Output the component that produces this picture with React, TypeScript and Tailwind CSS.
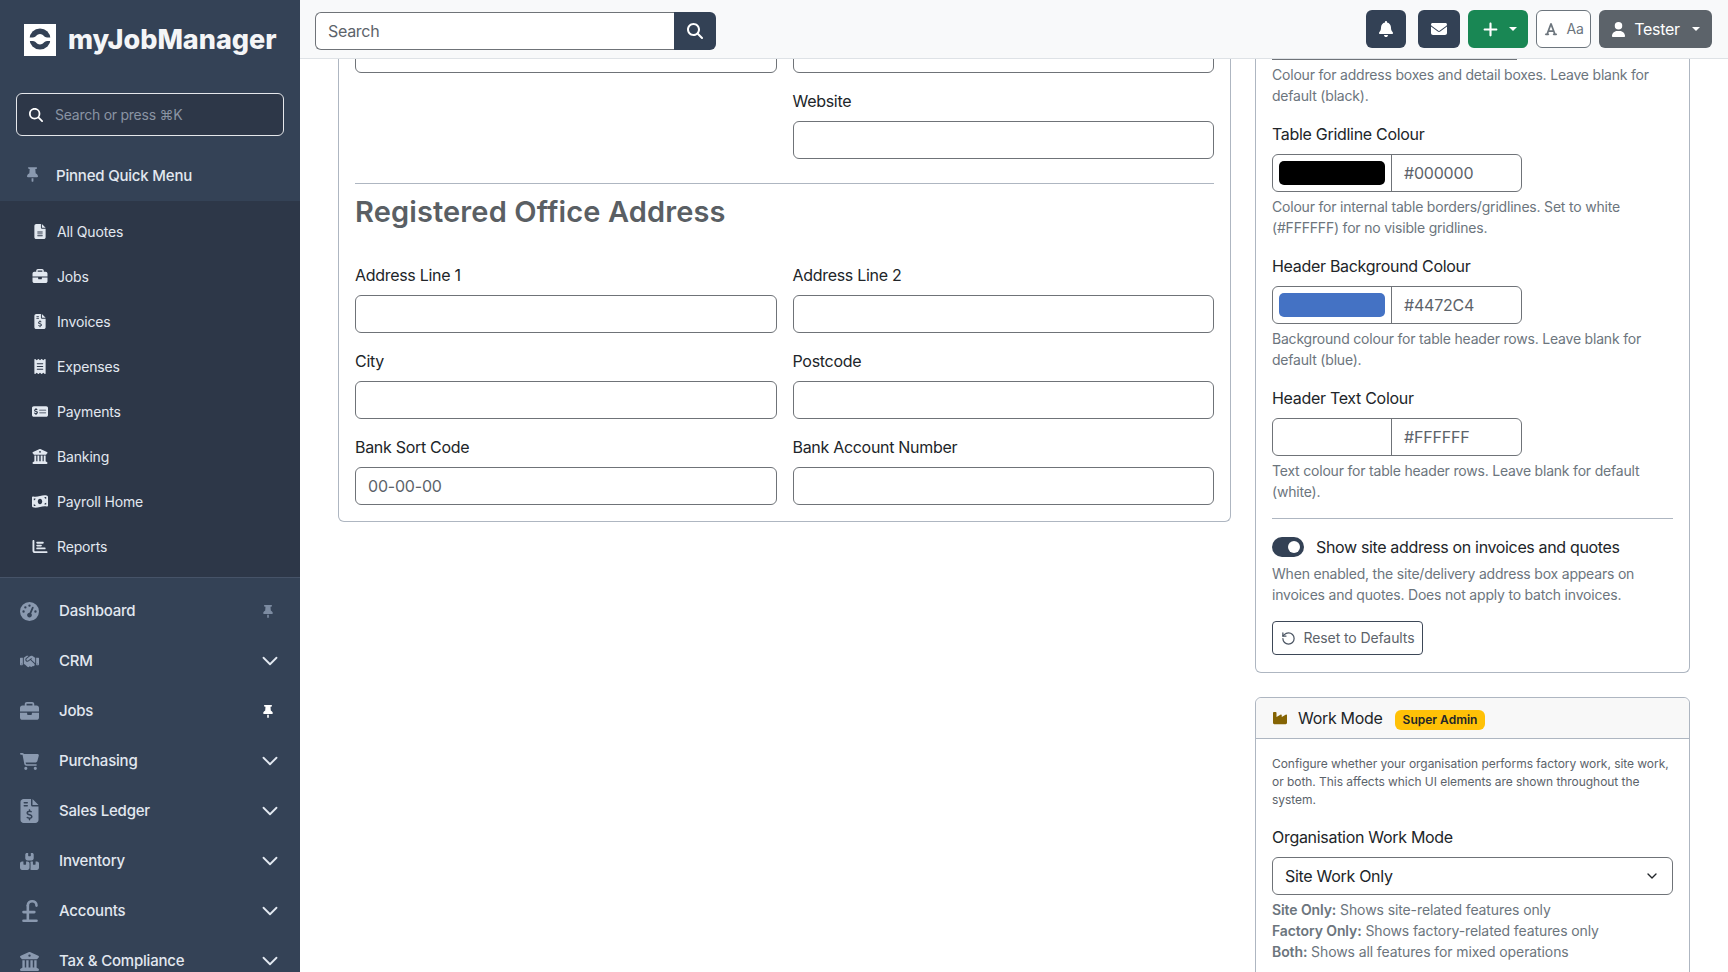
import {
  FaBell, FaEnvelope, FaPlus, FaUser, FaMagnifyingGlass, FaFont, FaIndustry, FaThumbtack,
  FaFileLines, FaBriefcase, FaFileInvoiceDollar, FaReceipt, FaMoneyCheckDollar, FaBuildingColumns,
  FaMoneyBillWave, FaChartBar, FaGaugeHigh, FaHandshake, FaCartShopping, FaBoxesStacked,
} from "react-icons/fa6"
import { ChevronDown, PoundSterling, RotateCcw } from "lucide-react"
import type { ReactNode } from "react"

const pinned = [
  { label: "All Quotes", icon: FaFileLines },
  { label: "Jobs", icon: FaBriefcase },
  { label: "Invoices", icon: FaFileInvoiceDollar },
  { label: "Expenses", icon: FaReceipt },
  { label: "Payments", icon: FaMoneyCheckDollar },
  { label: "Banking", icon: FaBuildingColumns },
  { label: "Payroll Home", icon: FaMoneyBillWave },
  { label: "Reports", icon: FaChartBar },
]

const nav = [
  { label: "CRM", icon: <FaHandshake className="h-[19px] w-[19px]" /> },
  { label: "Jobs", icon: <FaBriefcase className="h-[19px] w-[19px]" />, pin: true },
  { label: "Purchasing", icon: <FaCartShopping className="h-[19px] w-[19px]" /> },
  { label: "Sales Ledger", icon: <FaFileInvoiceDollar className="h-6 w-[19px]" /> },
  { label: "Inventory", icon: <FaBoxesStacked className="h-[19px] w-[19px]" /> },
  { label: "Accounts", icon: <PoundSterling className="-ml-[3px] h-[26px] w-[26px]" strokeWidth={2.4} /> },
  { label: "Tax & Compliance", icon: <FaBuildingColumns className="h-[19px] w-[19px]" /> },
]

function Logo() {
  return (
    <svg viewBox="0 0 32 32" className="h-8 w-8 shrink-0">
      <rect width="32" height="32" fill="#fff" />
      <circle cx="16" cy="15" r="10.500" fill="#334155" />
      <path d="M3 13.500h6c2.500 0 4-3.500 7-3.500s4.500 3.500 7 3.500h6v3.500h-6c-2.500 0-4 3.500-7 3.500s-4.500-3.500-7-3.500H3z" fill="#fff" />
    </svg>
  )
}

function Sidebar() {
  return (
    <aside className="w-[300px] shrink-0 overflow-hidden bg-[#344256]">
      <div className="flex h-[93px] items-start gap-3 pl-6 pt-6">
        <Logo />
        <span className="text-[27px] font-extrabold leading-8 text-[#f4f5f7]">myJobManager</span>
      </div>
      <div className="mx-4 flex h-[43px] items-center gap-3 rounded-md border border-[#e5e7eb] bg-[#2d3748] pl-3 text-sm tracking-[-0.25px] text-[#8a94a3]">
        <FaMagnifyingGlass className="h-[14px] w-[14px] text-white" />
        <span>Search or press ⌘K</span>
      </div>
      <div className="flex h-[65px] items-center pl-[27px] pt-[15px] text-[#e2e8f0]">
        <FaThumbtack className="-mt-[3px] h-[15px] w-[11px] text-[#8a99af]" />
        <span className="ml-[18px] text-[15px] font-medium tracking-[-0.2px]">Pinned Quick Menu</span>
      </div>
      <div className="border-b border-[#465368] bg-[#2d3748] py-2">
        {pinned.map((p) => (
          <div key={p.label} className="flex h-[45px] items-center text-[#e2e8f0]">
            <div className="w-[57px] shrink-0 pl-[32px]">
              <p.icon className="h-[15px] w-[16px]" />
            </div>
            <span className="text-sm tracking-[-0.15px]">{p.label}</span>
          </div>
        ))}
      </div>
      <div className="pt-2">
        <NavItem label="Dashboard" icon={<FaGaugeHigh className="h-[19px] w-[19px]" />} right={<FaThumbtack className="-ml-1 h-[13px] w-[10px] text-[#7c8ba1]" />} />
        {nav.map((n) => (
          <NavItem
            key={n.label}
            label={n.label}
            icon={n.icon}
            right={n.pin ? <FaThumbtack className="-ml-1 h-[13px] w-[10px] text-white" /> : <ChevronDown className="-mx-[6px] h-[26px] w-[26px] shrink-0 text-[#e2e8f0]" strokeWidth={1.7} />}
          />
        ))}
      </div>
    </aside>
  )
}

function NavItem({ label, icon, right }: { label: string; icon: ReactNode; right: ReactNode }) {
  return (
    <div className="flex h-[50px] items-center pl-5 pr-[23px]">
      <div className="w-[39px] shrink-0 text-[#8a99af]">{icon}</div>
      <span className="flex-1 text-[15px] font-medium tracking-[-0.2px] text-[#e2e8f0]">{label}</span>
      <div className="flex w-[14px] justify-center">{right}</div>
    </div>
  )
}

function Topbar() {
  return (
    <header className="flex h-[59px] shrink-0 items-center justify-between border-b border-[#dee2e6] bg-[#f8f9fa] pl-[15px] pr-4">
      <div className="mt-1 flex h-[38px] w-[401px]">
        <div className="flex flex-1 items-center rounded-l-md border border-r-0 border-[#6f7378] bg-white pl-3 text-base tracking-[-0.3px] text-[#5c636a]">Search</div>
        <div className="flex w-[42px] items-center justify-center rounded-r-md bg-[#334155] text-white">
          <FaMagnifyingGlass className="h-4 w-4" />
        </div>
      </div>
      <div className="flex items-center">
        <div className="flex h-[38px] w-10 items-center justify-center rounded-md bg-[#334155] text-white">
          <FaBell className="h-4 w-4" />
        </div>
        <div className="ml-3 flex h-[38px] w-[42px] items-center justify-center rounded-md bg-[#334155] text-white">
          <FaEnvelope className="h-4 w-4" />
        </div>
        <div className="ml-2 flex h-[38px] w-[60px] items-center justify-center gap-[6px] rounded-md bg-[#198754] pl-[2px] text-white">
          <FaPlus className="h-[17px] w-[17px]" />
          <Caret />
        </div>
        <div className="ml-2 flex h-[38px] w-[55px] items-center justify-center gap-[9px] rounded-md border border-[#6c757d] bg-white text-[#6c757d]">
          <FaFont className="h-[14px] w-[14px]" />
          <span className="text-sm tracking-[-0.3px]">Aa</span>
        </div>
        <div className="ml-2 flex h-[38px] w-[113px] items-center justify-center gap-[8px] rounded-md bg-[#5c636a] text-base tracking-[-0.3px] text-white">
          <FaUser className="h-[15px] w-[15px]" />
          <span>Tester</span>
          <Caret />
        </div>
      </div>
    </header>
  )
}

function Caret() {
  return <span className="ml-1 h-0 w-0 border-x-[4px] border-t-[4px] border-x-transparent border-t-white" />
}

function Field({ label, placeholder }: { label: string; placeholder?: string }) {
  return (
    <div className="mb-4">
      <div className="mb-2 text-base leading-6 tracking-[-0.3px] text-[#212529]">{label}</div>
      <div className="flex h-[38px] items-center rounded-md border border-[#6f7378] bg-white px-3 text-base tracking-[-0.2px] text-[#5c636a]">{placeholder}</div>
    </div>
  )
}

function ColourField({ label, value, swatch, help }: { label: string; value: string; swatch?: string; help: ReactNode }) {
  return (
    <div className="mb-4">
      <div className="mb-2 text-base leading-6 tracking-[-0.3px] text-[#212529]">{label}</div>
      <ColourInput value={value} swatch={swatch} />
      <p className="mt-1 text-sm leading-[21px] tracking-[-0.2px] text-[#6c757d]">{help}</p>
    </div>
  )
}

function ColourInput({ value, swatch }: { value: string; swatch?: string }) {
  return (
    <div className="flex h-[38px] w-[250px] rounded-md border border-[#6f7378] bg-white">
      <div className="flex w-[119px] items-center border-r border-[#6f7378] px-[6px]">
        {swatch && <div className="h-6 w-full rounded-[5px]" style={{ backgroundColor: swatch }} />}
      </div>
      <div className="flex flex-1 items-center px-3 text-base tracking-[-0.2px] text-[#5c636a]">{value}</div>
    </div>
  )
}

function LeftCard() {
  return (
    <div className="-mt-[24px] h-fit w-[893px] shrink-0 rounded-b-md border border-t-0 border-[#aeb6c1] px-4">
      <div className="grid grid-cols-2 gap-x-4">
        <div className="mb-4 h-[38px] rounded-md border border-[#6f7378]" />
        <div className="mb-4 h-[38px] rounded-md border border-[#6f7378]" />
        <div />
        <Field label="Website" />
      </div>
      <hr className="mt-2 border-[#aeb6c1]" />
      <h3 className="mb-[32px] mt-[9px] text-[29px] font-semibold leading-[38px] tracking-[0.13px] text-[#5a5f64]">Registered Office Address</h3>
      <div className="grid grid-cols-2 gap-x-4">
        <Field label="Address Line 1" />
        <Field label="Address Line 2" />
        <Field label="City" />
        <Field label="Postcode" />
        <Field label="Bank Sort Code" placeholder="00-00-00" />
        <Field label="Bank Account Number" />
      </div>
    </div>
  )
}

function RightColumn() {
  return (
    <div className="w-[435px] shrink-0">
      <div className="-mt-[24px] rounded-b-md border border-t-0 border-[#aeb6c1] px-4 pb-[17px]">
        <div className="w-[245px] border-b border-[#6f7378] pt-[24px]" />
        <p className="mb-4 mt-1 text-sm leading-[21px] tracking-[-0.2px] text-[#6c757d]">
          Colour for address boxes and detail boxes. Leave blank for default (black).
        </p>
        <ColourField
          label="Table Gridline Colour"
          value="#000000"
          swatch="#000000"
          help="Colour for internal table borders/gridlines. Set to white (#FFFFFF) for no visible gridlines."
        />
        <ColourField
          label="Header Background Colour"
          value="#4472C4"
          swatch="#4472C4"
          help="Background colour for table header rows. Leave blank for default (blue)."
        />
        <ColourField
          label="Header Text Colour"
          value="#FFFFFF"
          help="Text colour for table header rows. Leave blank for default (white)."
        />
        <hr className="my-4 border-[#aeb6c1]" />
        <div className="flex h-6 items-center">
          <div className="flex h-5 w-8 items-center justify-end rounded-full bg-[#334155] pr-1">
            <div className="h-3 w-3 rounded-full bg-white" />
          </div>
          <span className="ml-3 text-base tracking-[-0.35px] text-[#212529]">Show site address on invoices and quotes</span>
        </div>
        <p className="mt-1 text-sm leading-[21px] tracking-[-0.2px] text-[#6c757d]">
          When enabled, the site/delivery address box appears on invoices and quotes. Does not apply to batch invoices.
        </p>
        <div className="mt-4 flex h-[34px] w-[151px] items-center justify-center gap-2 rounded-[4px] border border-[#3d4757] text-sm tracking-[-0.1px] text-[#5c636a]">
          <RotateCcw className="h-[15px] w-[15px] text-[#4b5563]" />
          <span>Reset to Defaults</span>
        </div>
      </div>
      <div className="mt-6 rounded-t-md border border-[#aeb6c1]">
        <div className="flex h-[41px] items-center rounded-t-md border-b border-[#aeb6c1] bg-[#f8f8f8] pl-4">
          <FaIndustry className="h-[14px] w-4 text-[#856404]" />
          <span className="ml-[10px] text-base tracking-[-0.3px] text-[#212529]">Work Mode</span>
          <span className="ml-3 mt-[3px] rounded-md bg-[#ffc107] px-2 py-[2px] text-xs font-semibold text-[#212529]">Super Admin</span>
        </div>
        <div className="px-4 pb-8 pt-4">
          <p className="text-xs leading-[18px] tracking-[-0.05px] text-[#5c636a]">
            Configure whether your organisation performs factory work, site work, or both. This affects which UI elements are shown throughout the system.
          </p>
          <div className="mb-2 mt-4 text-base leading-6 tracking-[-0.3px] text-[#212529]">Organisation Work Mode</div>
          <div className="flex h-[38px] items-center justify-between rounded-md border border-[#6f7378] pl-3 pr-3 text-base tracking-[-0.3px] text-[#212529]">
            <span>Site Work Only</span>
            <ChevronDown className="h-4 w-4" />
          </div>
          <div className="mt-1 text-sm leading-[21px] tracking-[-0.1px] text-[#6c757d]">
            <div><b className="font-semibold">Site Only:</b> Shows site-related features only</div>
            <div><b className="font-semibold">Factory Only:</b> Shows factory-related features only</div>
            <div><b className="font-semibold">Both:</b> Shows all features for mixed operations</div>
          </div>
        </div>
      </div>
    </div>
  )
}

export default function App() {
  return (
    <div className="flex h-screen overflow-hidden bg-white [font-family:Inter,sans-serif]">
      <Sidebar />
      <div className="flex min-w-0 flex-1 flex-col">
        <Topbar />
        <main className="flex flex-1 items-start gap-6 overflow-hidden pl-[38px]">
          <LeftCard />
          <RightColumn />
        </main>
      </div>
    </div>
  )
}
